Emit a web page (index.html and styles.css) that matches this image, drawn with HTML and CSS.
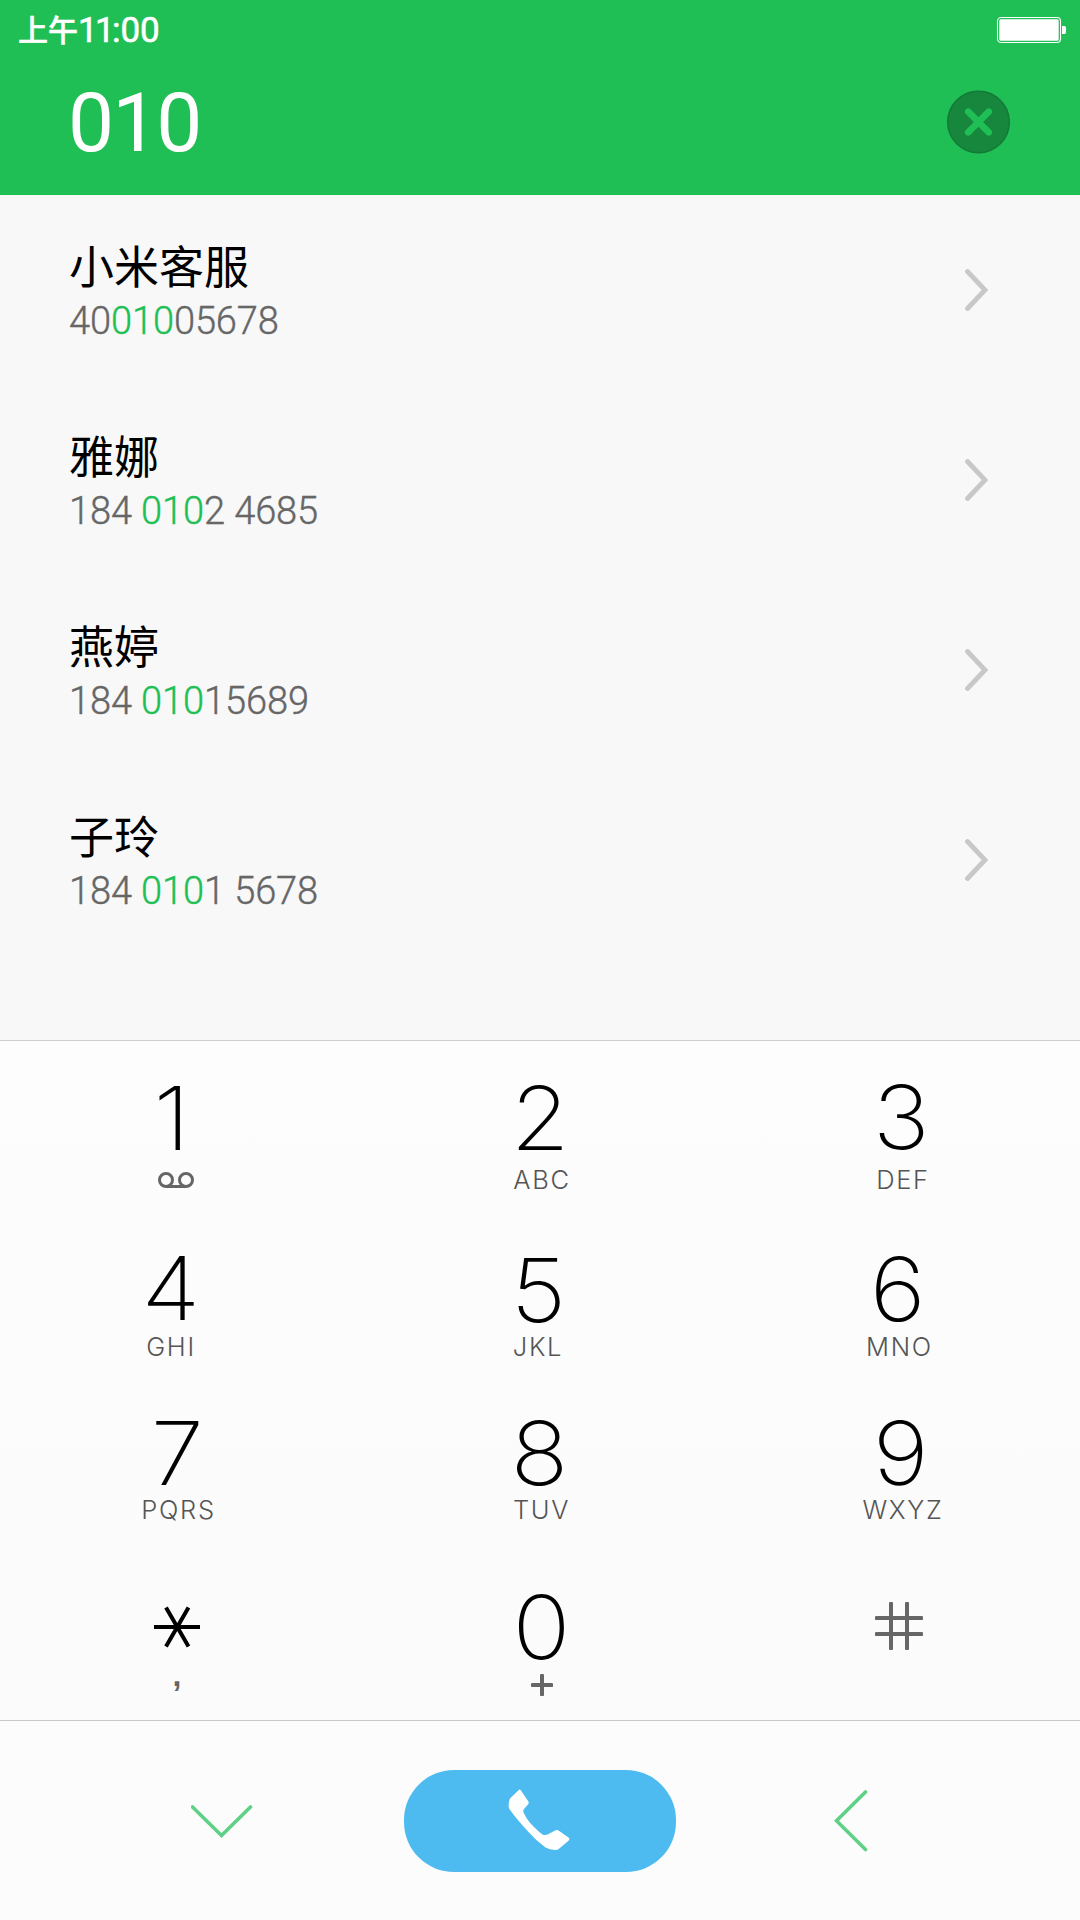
FILE: index.html
```html
<!DOCTYPE html>
<html lang="zh-CN">
<head>
<meta charset="utf-8">
<title>拨号</title>
<link rel="stylesheet" href="styles.css">
</head>
<body>
<div class="screen">
  <header class="header">
    <div class="status">
      <div class="time"><span class="ampm">上午</span><span class="clock"><span class="hour">11</span>:00</span></div>
      <svg width="70" height="28" viewBox="0 0 70 28">
        <rect x="1.5" y="1.5" width="63" height="25" rx="3.5" fill="none" stroke="#fff" stroke-width="1.1"/>
        <rect x="3.300" y="3.300" width="59.400" height="21.400" rx="1.500" fill="#fff"/>
        <path d="M66 10h2.500q1.500 0 1.500 2v4q0 2-1.500 2H66z" fill="#fff"/>
      </svg>
    </div>
    <div class="query">
      <span class="query-text">010</span>
      <svg class="clear" width="64" height="64" viewBox="0 0 64 64">
        <circle cx="32.500" cy="32" r="30.800" fill="#17873d" stroke="#137a36" stroke-width="1.500"/>
        <path d="M22.200 21.700L42.800 42.300M42.800 21.700L22.200 42.300" stroke="#20bf55" stroke-width="6.600" stroke-linecap="round"/>
      </svg>
    </div>
  </header>

  <ul class="results">
    <li class="contact">
      <div><div class="name">小米客服</div><div class="number">40<em>010</em>05678</div></div>
      <svg class="arrow" width="24" height="44" viewBox="0 0 24 44"><path d="M2.500 3.500L20 22L2.500 40.500"/></svg>
    </li>
    <li class="contact">
      <div><div class="name">雅娜</div><div class="number">184 <em>010</em>2 4685</div></div>
      <svg class="arrow" width="24" height="44" viewBox="0 0 24 44"><path d="M2.500 3.500L20 22L2.500 40.500"/></svg>
    </li>
    <li class="contact">
      <div><div class="name">燕婷</div><div class="number">184 <em>010</em>15689</div></div>
      <svg class="arrow" width="24" height="44" viewBox="0 0 24 44"><path d="M2.500 3.500L20 22L2.500 40.500"/></svg>
    </li>
    <li class="contact">
      <div><div class="name">子玲</div><div class="number">184 <em>010</em>1 5678</div></div>
      <svg class="arrow" width="24" height="44" viewBox="0 0 24 44"><path d="M2.500 3.500L20 22L2.500 40.500"/></svg>
    </li>
  </ul>

  <div class="keypad">
    <div class="key k1"><span class="digit">1</span>
      <svg class="voicemail" width="36" height="16" viewBox="0 0 36 16"><circle cx="8" cy="8" r="6.500"/><circle cx="28" cy="8" r="6.500"/><path d="M8 14.500H28"/></svg></div>
    <div class="key k2"><span class="digit">2</span><span class="letters">ABC</span></div>
    <div class="key k3"><span class="digit">3</span><span class="letters">DEF</span></div>
    <div class="key k4"><span class="digit">4</span><span class="letters">GHI</span></div>
    <div class="key k5"><span class="digit">5</span><span class="letters">JKL</span></div>
    <div class="key k6"><span class="digit">6</span><span class="letters">MNO</span></div>
    <div class="key k7"><span class="digit">7</span><span class="letters">PQRS</span></div>
    <div class="key k8"><span class="digit">8</span><span class="letters">TUV</span></div>
    <div class="key k9"><span class="digit">9</span><span class="letters">WXYZ</span></div>
    <div class="key star">
      <svg width="46" height="42" viewBox="0 0 46 42"><path d="M0 21H46M12 1.500L34.500 40.500M34.500 1.500L12 40.500" stroke="#000" stroke-width="4"/></svg>
      <span class="pause">,</span></div>
    <div class="key k0"><span class="digit">0</span>
      <svg class="plus" width="22" height="22" viewBox="0 0 22 22"><path d="M1.500 11H20.500M11 1.500V20.500"/></svg></div>
    <div class="key hash">
      <svg width="48" height="48" viewBox="0 0 48 48"><path d="M1.500 16H46.500M1.500 32H46.500M16 1.500V46.500M32 1.500V46.500"/></svg></div>
  </div>

  <nav class="actions">
    <svg class="hide" width="62" height="34" viewBox="0 0 62 34"><path d="M1.500 2L30.500 30.500L59.500 2"/></svg>
    <div class="call">
      <svg width="62" height="62" viewBox="0 0 62 62"><path d="M10.500 1.200Q11.800 -.2 13 1.500L20.500 12.700Q21 14 20.200 15.200L16 20Q14.800 21.500 15.500 23.500Q19.500 32 26.500 38.500Q31 43 34.500 45.500Q37.500 46.800 40.500 45L47.500 41.300Q49 40.500 50.500 41.500L60.500 48.500Q62.300 50 60.500 51.800L51 59.700Q49.500 61 47 60.900Q41.500 60.800 37.500 58.500Q28 51.500 20.500 43Q8 29.500 1 19.500Q0 14.500 2 9.500Z"/></svg>
    </div>
    <svg class="back" width="34" height="62" viewBox="0 0 34 62"><path d="M31.500 2L2.500 30.800L31.500 59.500"/></svg>
  </nav>
</div>
</body>
</html>
```
FILE: styles.css
```css
* { box-sizing: border-box; }

body {
  margin: 0;
  background: #f8f8f8;
  font-family: Roboto, "Noto Sans CJK SC", sans-serif;
}

svg { display: block; fill: none; flex: none; }

.screen {
  width: 1080px;
  height: 1920px;
  display: flex;
  flex-direction: column;
  overflow: hidden;
}

/* Header */
.header { height: 195px; background: #20bf55; color: #fff; }

.status {
  height: 60px;
  padding: 0 14px 0 18px;
  display: flex;
  justify-content: space-between;
  align-items: center;
}
.time { display: flex; align-items: center; }
.ampm { font: 500 30px/60px "Noto Sans CJK SC", sans-serif; margin-top: -5px; -webkit-text-stroke: 0.5px #fff; }
.clock { font-weight: 400; font-size: 35px; line-height: 60px; padding-top: 1px; -webkit-text-stroke: 0.6px #fff; }
.hour { letter-spacing: -2.7px; }

.query {
  height: 123px;
  padding: 0 70px 0 68px;
  display: flex;
  justify-content: space-between;
  align-items: center;
}
.query-text { font-size: 82px; letter-spacing: -1.9px; line-height: 100px; padding-top: 2px; }

/* Matching contacts */
.results { list-style: none; margin: 0; padding: 0; height: 845px; background: #f8f8f8; }
.contact {
  height: 190px;
  padding: 0 91px 0 69px;
  display: flex;
  justify-content: space-between;
  align-items: center;
}
.name { font: 400 45px/56px "Noto Sans CJK SC", sans-serif; color: #000; padding-top: 5px; }
.number {
  font-size: 38px;
  line-height: 54px;
  padding-top: 1px;
  letter-spacing: -0.1px;
  font-weight: 300;
  color: #666;
  -webkit-text-stroke: 0.4px currentColor;
}
.number em { font-style: normal; color: #20bf55; }
.arrow { stroke: #c8c8c8; stroke-width: 4.8; stroke-linecap: round; }

/* Keypad */
.keypad {
  height: 680px;
  border-top: 1px solid #cdcdcd;
  background: linear-gradient(#fdfdfd, #fbfbfb);
  display: grid;
  grid-template-columns: 354px 372px 354px;
  grid-template-rows: 170px 165px 173px 171px;
}
.key { display: flex; flex-direction: column; align-items: center; }
.digit {
  font: 200 88px/80px Inter, sans-serif;
  color: #000;
  margin-top: 37px;
  margin-bottom: 1px;
  transform: scaleX(1.09);
}
.letters {
  font: 300 25.5px/30px Inter, sans-serif;
  letter-spacing: 1.7px;
  color: #555;
  margin-top: 6px;
}
.voicemail { stroke: #666; stroke-width: 3; margin-top: 13px; }
.k1 .digit { margin-right: 10px; }
.k1 .voicemail { margin-right: 2px; }
.k2 .letters { margin-left: 4px; }
.k3 .digit { margin-right: 3px; margin-top: 36px; }
.k3 .letters { margin-top: 7px; }
.k4, .k5, .k6 { gap: 3px; }
.k4 .letters, .k5 .letters, .k6 .letters { margin-top: 0; }
.k4 { padding-right: 12px; }
.k5 { padding-right: 4px; padding-top: 2px; gap: 1px; }
.k6 { padding-right: 7px; padding-top: 1px; gap: 2px; }
.k6 .digit { margin-right: 3px; }
.k7 .letters, .k8 .letters, .k9 .letters { margin-top: 1px; }
.k7 .letters, .k8 .letters { margin-left: 3px; }
.k9 .digit { margin-right: 4px; }

.k0 { padding-left: 3px; }
.k0 .digit { margin-top: 38px; margin-bottom: 0; }
.plus { stroke: #666; stroke-width: 4; stroke-linecap: round; margin-top: 7px; }
.star svg { margin-top: 57px; }
.pause { font: 700 32px/24px "Liberation Sans", sans-serif; color: #666; margin-top: 15px; }
.hash svg { margin: 53px 8px 0 0; stroke: #666; stroke-width: 4; stroke-linecap: round; }

/* Bottom actions */
.actions {
  height: 200px;
  border-top: 1px solid #c9c9c9;
  background: #fcfcfc;
  padding-left: 191px;
  display: flex;
  align-items: center;
}
.call {
  width: 272px;
  height: 102px;
  margin: 0 158px 0 151px;
  border-radius: 50px;
  background: #4ebbf0;
  display: flex;
  align-items: center;
  justify-content: center;
}
.call svg { margin: 0 3px 2px 0; fill: #fff; }
.hide, .back { stroke: #5fd186; stroke-width: 3.6; stroke-linecap: round; }
.hide { margin-top: 2px; }
```
